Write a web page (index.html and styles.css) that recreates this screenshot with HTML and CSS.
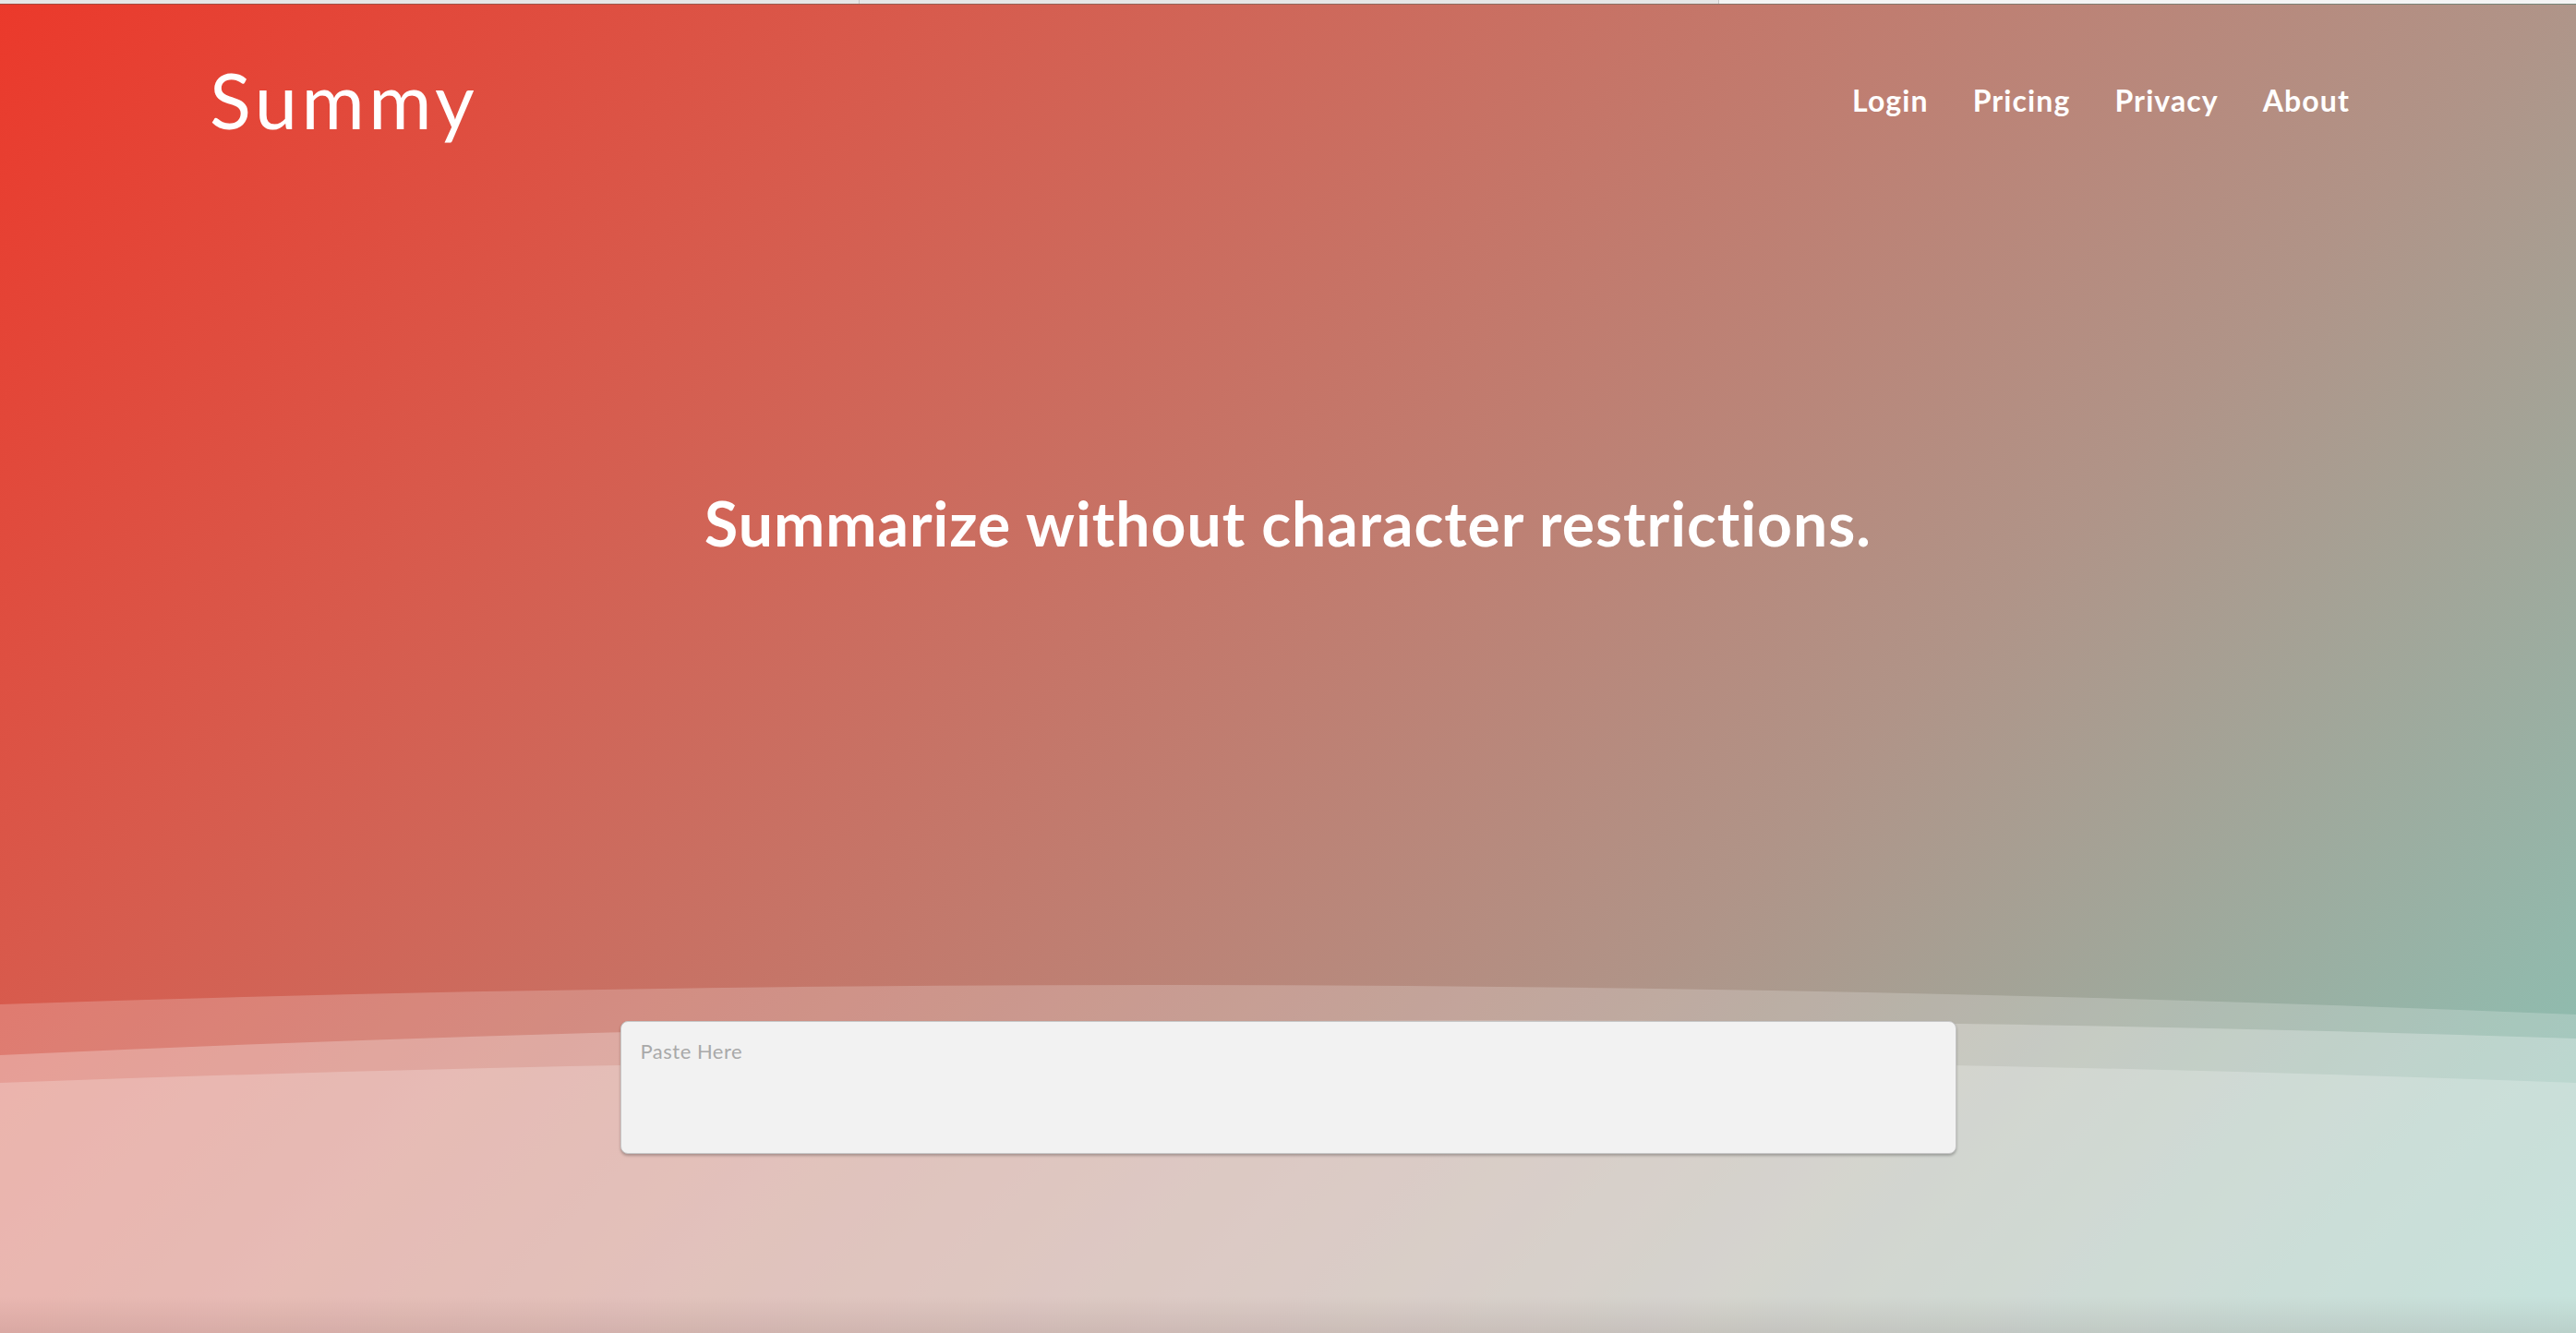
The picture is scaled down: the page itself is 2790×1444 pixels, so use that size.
FILE: index.html
```html
<!DOCTYPE html>
<html lang="en">
<head>
<meta charset="utf-8">
<title>Summy</title>
<link rel="stylesheet" href="styles.css">
</head>
<body>
<div class="tabstrip">
  <div class="tab"></div>
  <div class="tab"></div>
  <div class="tab tab-active"></div>
</div>
<section class="hero">
  <header class="topbar">
    <a class="logo" href="#">Summy</a>
    <nav class="nav">
      <a class="nav-link" href="#">Login</a>
      <a class="nav-link" href="#">Pricing</a>
      <a class="nav-link" href="#">Privacy</a>
      <a class="nav-link" href="#">About</a>
    </nav>
  </header>
  <h1 class="headline">Summarize without character restrictions.</h1>
  <svg class="waves" viewBox="0 1044 2790 400" preserveAspectRatio="none" aria-hidden="true">
    <path d="M0 1088 Q1395 1041 2790 1099 V1444 H0 Z" fill="#fff" fill-opacity="0.2"/>
    <path d="M0 1143 Q1395 1078 2790 1125 V1444 H0 Z" fill="#fff" fill-opacity="0.26"/>
    <path d="M0 1173 Q1395 1121 2790 1173 V1444 H0 Z" fill="#fff" fill-opacity="0.22"/>
  </svg>
  <div class="composer">
    <textarea class="paste" placeholder="Paste Here"></textarea>
  </div>
</section>
</body>
</html>
```

FILE: styles.css
```css
html, body {
  margin: 0;
  padding: 0;
  height: 100%;
  overflow: hidden;
}

body {
  font-family: "Lato", "Open Sans", sans-serif;
  font-variant-ligatures: none;
  background: #ffffff;
}

.tabstrip {
  display: flex;
  height: 4px;
}

.tab {
  width: 930px;
  background: #e6e6e6;
  border-right: 1px solid #c6c6c6;
}

.tab-active {
  flex: 1;
  width: auto;
  background: #f4f4f4;
  border-right: none;
}

.hero {
  position: relative;
  height: 1439px;
  border-top: 1px solid rgba(90, 20, 10, 0.35);
  background: linear-gradient(133deg, #eb392b 0%, #d85a4c 24%, #b09488 67%, #93b8ab 90%, #86c4b6 100%);
  overflow: hidden;
}

.hero::after {
  content: "";
  position: absolute;
  left: 0;
  right: 0;
  bottom: 0;
  height: 40px;
  background: linear-gradient(to bottom, rgba(60, 20, 20, 0), rgba(60, 20, 20, 0.09));
  pointer-events: none;
}

.topbar {
  display: flex;
  justify-content: space-between;
  align-items: center;
  padding: 62px 221px 0 227px;
}

.logo {
  font-size: 83px;
  line-height: 1;
  font-weight: 400;
  color: #ffffff;
  text-decoration: none;
  letter-spacing: 4.5px;
}

.nav {
  display: flex;
  align-items: center;
}

.nav-link {
  font-size: 32px;
  line-height: 1;
  font-weight: 700;
  color: #ffffff;
  text-decoration: none;
  letter-spacing: 1.1px;
  padding: 0 24px;
}

.headline {
  margin: 384px 0 0 0;
  text-align: center;
  font-size: 66px;
  line-height: 1;
  font-weight: 700;
  color: #ffffff;
  letter-spacing: 1px;
}

.waves {
  position: absolute;
  left: 0;
  bottom: 0;
  width: 100%;
  height: 400px;
  display: block;
}

.composer {
  position: relative;
  z-index: 1;
  display: flex;
  justify-content: center;
  margin-top: 506px;
}

.paste {
  box-sizing: border-box;
  width: 1447px;
  height: 144px;
  padding: 18px 21px;
  border: 1px solid #c6c6c6;
  border-radius: 8px;
  background: #f2f2f2;
  box-shadow: 0 2px 3px rgba(0, 0, 0, 0.25);
  font-family: "Lato", "Open Sans", sans-serif;
  font-size: 22px;
  letter-spacing: 0.5px;
  color: #555;
  resize: none;
  outline: none;
}

.paste::placeholder {
  color: #a9a9a9;
}
```
